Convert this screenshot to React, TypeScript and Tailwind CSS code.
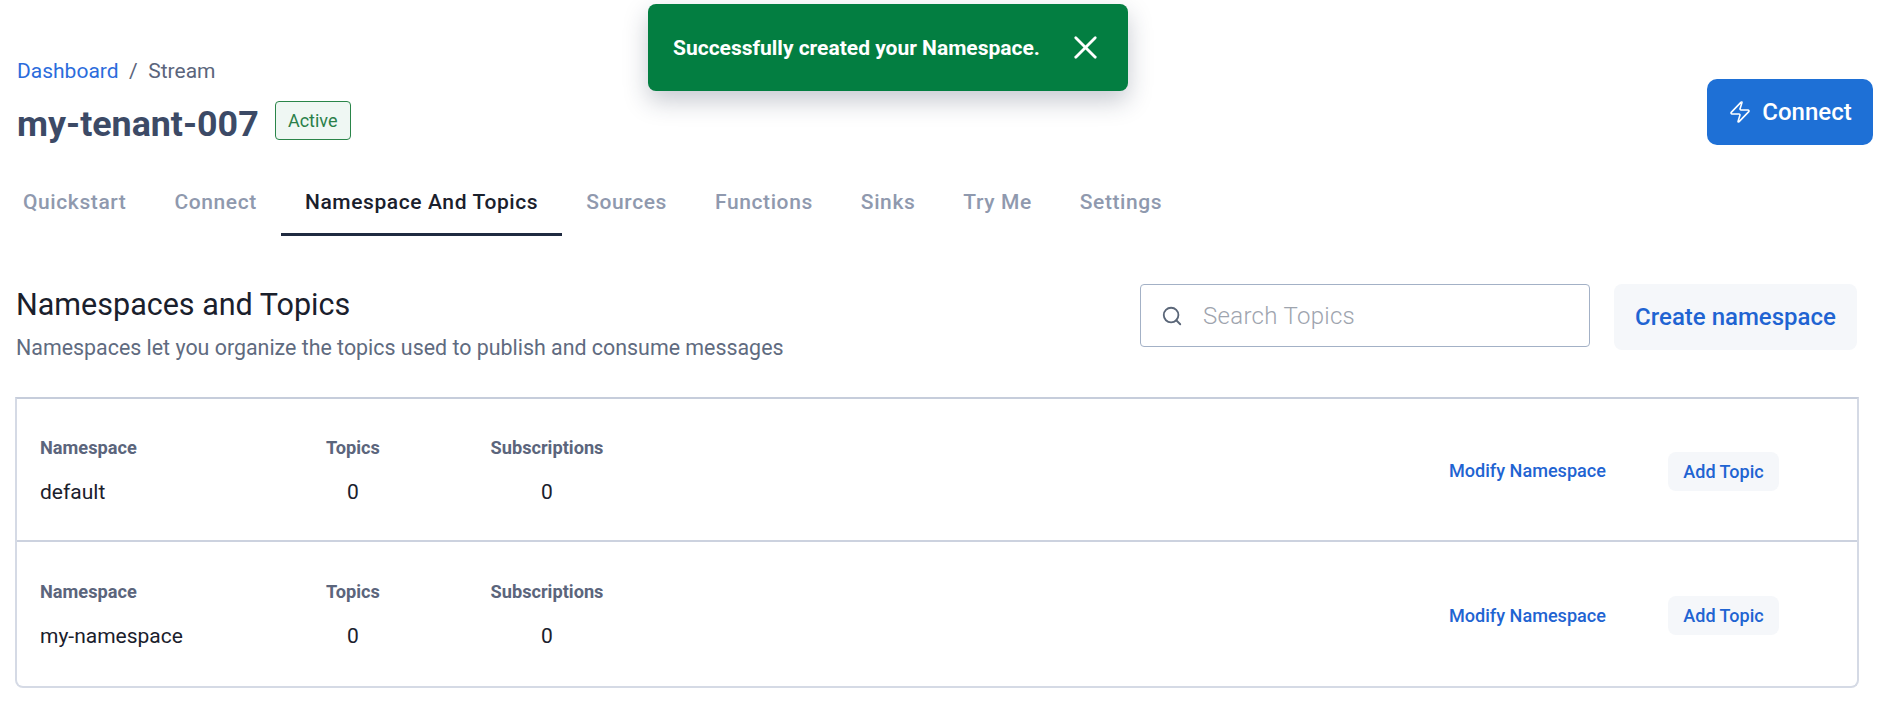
import { Search, X, Zap } from 'lucide-react'

const tabs = ['Quickstart', 'Connect', 'Namespace And Topics', 'Sources', 'Functions', 'Sinks', 'Try Me', 'Settings']
const namespaces = ['default', 'my-namespace']

function NamespaceRow({ name, last }: { name: string; last: boolean }) {
  return (
    <div className={`flex items-center pr-[78px] pl-[23px] ${last ? 'h-[144px]' : 'h-[143px] border-b-2 border-[#ccd2df]'}`}>
      <div className="w-[286px]">
        <div className="text-[18.2px] leading-6 font-bold text-[#5b657c]">Namespace</div>
        <div className="mt-5 text-[21px] leading-6 text-[#1a202c]">{name}</div>
      </div>
      <div className="w-[164px]">
        <div className="w-[54px] text-center text-[18.2px] leading-6 font-bold text-[#5b657c]">Topics</div>
        <div className="mt-5 w-[54px] text-center text-[21px] leading-6 text-[#1a202c]">0</div>
      </div>
      <div className="w-[114px] text-center">
        <div className="text-[18.2px] leading-6 font-bold whitespace-nowrap text-[#5b657c]">Subscriptions</div>
        <div className="mt-5 text-[21px] leading-6 text-[#1a202c]">0</div>
      </div>
      <div className="mt-[3px] ml-auto flex items-center gap-[62px]">
        <button className="text-[18.1px] font-medium text-[#1f64d2]">Modify Namespace</button>
        <button className="h-[39px] w-[111px] rounded-lg bg-[#f5f7fa] text-[18px] font-medium text-[#1f64d2]">Add Topic</button>
      </div>
    </div>
  )
}

export default function App() {
  return (
    <div className="relative h-[704px] overflow-hidden bg-white font-['Roboto',sans-serif]">
      {/* toast */}
      <div className="absolute top-[4px] left-[648px] flex h-[87px] w-[480px] items-center rounded-lg bg-[#037e41] pl-[25px] shadow-[0_10px_24px_rgba(30,45,70,0.25)]">
        <span className="pt-[2px] text-[21px] font-bold whitespace-nowrap text-white">Successfully created your Namespace.</span>
        <X className="ml-[26px] text-white" size={39} strokeWidth={1.7} />
      </div>

      <div className="flex items-start justify-between pt-[58px] pr-[13px] pl-[17px]">
        <div>
          <div className="flex h-[28px] items-center text-[21px] text-[#5b657c]">
            <span className="text-[#2b6cdc]">Dashboard</span>
            <span className="mx-[10.5px]">/</span>
            <span>Stream</span>
          </div>
          <div className="mt-[13px] flex items-start">
            <h1 className="text-[35.8px] leading-[50px] font-bold text-[#3c4a66]">my-tenant-007</h1>
            <span className="mt-[2px] ml-[16px] flex h-[39px] w-[76px] items-center justify-center rounded border border-[#2a8549] bg-[#eff7f3] text-[18px] text-[#2a7f49]">Active</span>
          </div>
        </div>
        <button className="mt-[21px] flex h-[66px] w-[166px] items-center justify-center gap-[10px] rounded-[10px] bg-[#1e70d6] text-[24px] font-medium text-white">
          <Zap size={24} strokeWidth={1.6} />
          Connect
        </button>
      </div>

      <div className="mt-[22px] -ml-px flex">
        {tabs.map((tab) => (
          <div
            key={tab}
            className={`flex h-[65px] items-center border-b-[3px] px-6 pt-[2px] text-[21px] font-medium tracking-[0.6px] ${tab === 'Namespace And Topics' ? 'border-[#1f2a40] text-[#1a202c]' : 'border-transparent text-[#8f99ae]'}`}
          >
            {tab}
          </div>
        ))}
      </div>

      <div className="mt-[48px] flex items-start justify-between pr-[29px] pl-[16px]">
        <div>
          <h2 className="text-[30.5px] leading-[42px] text-[#1a202c]">Namespaces and Topics</h2>
          <p className="mt-[8px] text-[21.4px] leading-7 text-[#5f6b80]">Namespaces let you organize the topics used to publish and consume messages</p>
        </div>
        <div className="flex gap-6">
          <div className="flex h-[63px] w-[450px] items-center rounded border border-[#a3b1c6] pl-5">
            <Search className="text-[#5a6678]" size={22} strokeWidth={2} />
            <span className="ml-5 text-[24px] font-light tracking-[0.3px] text-[#9ea4ae]">Search Topics</span>
          </div>
          <button className="h-[66px] w-[243px] rounded-lg bg-[#f5f7fa] text-[24px] font-medium text-[#1f64d2]">Create namespace</button>
        </div>
      </div>

      <div className="mt-[35px] mr-[27px] ml-[15px] rounded-b-lg border-2 border-[#d5dae5] border-t-[#c6cddb]">
        {namespaces.map((name, i) => (
          <NamespaceRow key={name} name={name} last={i === namespaces.length - 1} />
        ))}
      </div>
    </div>
  )
}
